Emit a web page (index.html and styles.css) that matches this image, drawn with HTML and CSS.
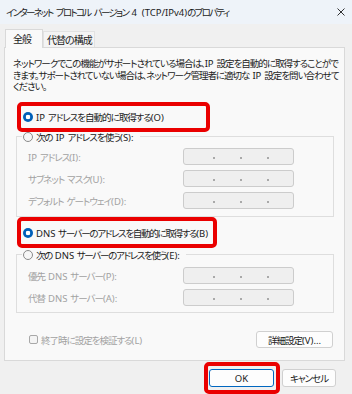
FILE: index.html
```html
<!DOCTYPE html>
<html lang="ja">
<head>
    <meta charset="UTF-8">
    <meta name="viewport" content="width=device-width, initial-scale=1.0">
    <title>インターネット プロトコル バージョン 4 (TCP/IPv4)のプロパティ</title>
    <link rel="stylesheet" href="styles.css">
</head>
<body>
    <div class="titlebar">
        <span class="title">インターネット プロトコル バージョン <span class="en">4 (TCP/IPv4)</span>のプロパティ</span>
        <svg class="close" width="8" height="8" viewBox="0 0 8 8"><path d="M0.5 0.5L7.5 7.5M7.5 0.5L0.5 7.5" stroke="#1b1b1b" stroke-width="0.9"/></svg>
    </div>

    <div class="tabs">
        <div class="tab active">全般</div>
        <div class="tab">代替の構成</div>
    </div>

    <div class="panel">
        <p class="desc">ネットワークでこの機能がサポートされている場合は、<span class="en">IP</span> 設定を自動的に取得することがで<br>きます。サポートされていない場合は、ネットワーク管理者に適切な <span class="en">IP</span> 設定を問い合わせて<br>ください。</p>

        <div class="choice auto-ip">
            <span class="radio on"></span><span><span class="en">IP</span> アドレスを自動的に取得する<span class="en">(O)</span></span>
            <span class="mark"></span>
        </div>

        <div class="group ip-group">
            <div class="legend"><span class="radio"></span><span>次の <span class="en">IP</span> アドレスを使う<span class="en">(S):</span></span></div>
            <div class="fields">
                <span class="label"><span class="en">IP</span> アドレス<span class="en">(I):</span></span>
                <div class="ip"><i></i><i></i><i></i></div>
                <span class="label">サブネット マスク<span class="en">(U):</span></span>
                <div class="ip"><i></i><i></i><i></i></div>
                <span class="label">デフォルト ゲートウェイ<span class="en">(D):</span></span>
                <div class="ip"><i></i><i></i><i></i></div>
            </div>
        </div>

        <div class="choice auto-dns">
            <span class="radio on"></span><span class="tight"><span class="en">DNS</span> サーバーのアドレスを自動的に取得する<span class="en">(B)</span></span>
            <span class="mark"></span>
        </div>

        <div class="group dns-group">
            <div class="legend"><span class="radio"></span><span class="tight">次の <span class="en">DNS</span> サーバーのアドレスを使う<span class="en">(E):</span></span></div>
            <div class="fields">
                <span class="label">優先 <span class="en">DNS</span> サーバー<span class="en">(P):</span></span>
                <div class="ip"><i></i><i></i><i></i></div>
                <span class="label">代替 <span class="en">DNS</span> サーバー<span class="en">(A):</span></span>
                <div class="ip"><i></i><i></i><i></i></div>
            </div>
        </div>

        <div class="footer">
            <label class="check"><span class="box"></span><span>終了時に設定を検証する<span class="en">(L)</span></span></label>
            <button class="btn advanced">詳細設定<span class="en">(V)...</span></button>
        </div>
    </div>

    <div class="actions">
        <button class="btn ok"><span class="en">OK</span><span class="mark"></span></button>
        <button class="btn cancel">キャンセル</button>
    </div>
</body>
</html>
```

FILE: styles.css
```css
body {
    margin: 0;
    width: 352px;
    height: 394px;
    overflow: hidden;
    background: #f0f0f0;
    color: #1b1b1b;
    font-family: "Noto Sans", "Noto Sans CJK JP", sans-serif;
    font-feature-settings: "palt";
    font-size: 9.5px;
    letter-spacing: -1px;
    word-spacing: 1.5px;
}
.en {
    letter-spacing: 0;
}
.tight {
    letter-spacing: -1.3px;
}
.titlebar {
    height: 24px;
    display: flex;
    align-items: center;
    justify-content: space-between;
    padding: 0 7px 0 6px;
    background: #eef3f9;
}
.title {
    font-size: 9.5px;
    letter-spacing: -1.7px;
    word-spacing: 2.5px;
    white-space: nowrap;
}
.tabs {
    display: flex;
    align-items: flex-end;
    padding: 5px 0 0 5px;
}
.tab {
    height: 16px;
    padding: 0 2px 0 3px;
    box-sizing: border-box;
    border: 1px solid #e2e2e2;
    border-bottom: none;
    background: #f4f4f4;
    font-size: 10px;
    letter-spacing: -1px;
    line-height: 16px;
    white-space: nowrap;
}
.tab.active {
    position: relative;
    z-index: 1;
    width: 38px;
    height: 19px;
    padding: 0 0 0 7px;
    border-color: #d9d9d9;
    background: #f9f9f9;
    line-height: 18px;
    margin-bottom: -1px;
}
.panel {
    margin-left: 4px;
    width: 341px;
    box-sizing: border-box;
    border: 1px solid #d9d9d9;
    background: #f9f9f9;
    padding-bottom: 12px;
}
.desc {
    margin: 10px 0 0 8px;
    line-height: 11.5px;
    white-space: nowrap;
    color: #222;
}
.choice {
    position: relative;
    display: flex;
    align-items: center;
    gap: 3px;
    height: 14px;
    margin-left: 18px;
    white-space: nowrap;
}
.auto-ip {
    margin-top: 17.5px;
}
.auto-dns {
    margin-top: 9px;
}
.mark {
    position: absolute;
    border: 4px solid #ea0000;
    border-radius: 5px;
    box-sizing: border-box;
    pointer-events: none;
}
.auto-ip .mark {
    left: -6px;
    top: -8px;
    width: 193px;
    height: 30px;
}
.auto-dns .mark {
    left: -6px;
    top: -9px;
    width: 200px;
    height: 31px;
}
.radio {
    width: 10px;
    height: 10px;
    box-sizing: border-box;
    border-radius: 50%;
    border: 1px solid #8a8a8a;
    background: #f6f6f6;
    flex: none;
}
.radio.on {
    border: none;
    background: radial-gradient(circle, #fff 0 2px, #005fb8 2.6px);
}
.group {
    margin-left: 11px;
    width: 318px;
    box-sizing: border-box;
    border: 1px solid #dedede;
}
.ip-group {
    margin-top: 12px;
    padding-bottom: 7px;
}
.dns-group {
    margin-top: 14px;
    padding-bottom: 6px;
}
.legend {
    display: flex;
    align-items: center;
    gap: 3px;
    width: max-content;
    height: 14px;
    margin: -7px 0 0 5px;
    padding: 0 6px 0 1px;
    background: #f9f9f9;
    white-space: nowrap;
}
.fields {
    display: grid;
    grid-template-columns: 166px 111px;
    grid-auto-rows: 17px;
    row-gap: 5px;
    align-items: center;
}
.ip-group .fields {
    margin-top: 4px;
}
.dns-group .fields {
    margin-top: 5px;
}
.label {
    padding-left: 11px;
    color: #a2a2a2;
    white-space: nowrap;
}
.ip {
    height: 17px;
    box-sizing: border-box;
    border: 1px solid #cccccc;
    border-radius: 3px;
    background: #efefef;
    display: flex;
    align-items: flex-end;
    gap: 25px;
    padding: 0 0 5px 29px;
}
.ip i {
    width: 2px;
    height: 2px;
    background: #a9a9a9;
}
.footer {
    display: flex;
    align-items: center;
    justify-content: space-between;
    margin: 18px 11px 0 24px;
}
.check {
    display: flex;
    align-items: center;
    gap: 3px;
    color: #a2a2a2;
}
.box {
    width: 9px;
    height: 9px;
    box-sizing: border-box;
    border: 1px solid #a8a8a8;
    border-radius: 2px;
    background: #f4f4f4;
}
.btn {
    font: inherit;
    font-feature-settings: "palt";
    letter-spacing: inherit;
    word-spacing: inherit;
    color: #1b1b1b;
    height: 17px;
    padding: 0;
    border: 1px solid #d0d0d0;
    border-radius: 3px;
    background: #fdfdfd;
}
.advanced {
    width: 77px;
}
.actions {
    display: flex;
    justify-content: flex-end;
    gap: 8px;
    margin: 8px 16px 0 0;
}
.ok {
    position: relative;
    width: 65px;
    height: 18px;
    border-color: #0067c0;
}
.cancel {
    width: 54px;
    height: 18px;
}
.ok .mark {
    left: -6px;
    top: -8px;
    width: 76px;
    height: 32px;
}
```
